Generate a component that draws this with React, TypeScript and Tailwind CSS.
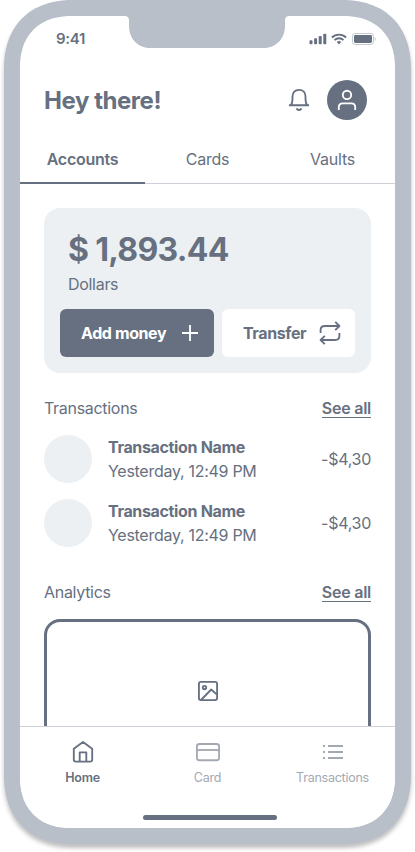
import type { ReactNode } from "react";

const base = {
  fill: "none",
  stroke: "currentColor",
  strokeWidth: 1.85,
  strokeLinejoin: "round" as const,
};

function StatusBar() {
  return (
    <div className="flex h-11 shrink-0 items-center justify-between pl-9 pr-[19px] pt-0.5">
      <span className="text-[15px] font-semibold leading-5 tracking-[-0.3px]">9:41</span>
      <svg width="67" height="12" viewBox="0 0 67 12" fill="currentColor">
        <rect x="0.5" y="7.3" width="3" height="4" rx="0.8" />
        <rect x="5.1" y="5.3" width="3" height="6" rx="0.8" />
        <rect x="9.7" y="3" width="3" height="8.3" rx="0.8" />
        <rect x="14.3" y="0.7" width="3" height="10.6" rx="0.8" />
        <g fill="none" stroke="currentColor" strokeWidth="1.9">
          <path d="M22.9 4.5a10.2 10.2 0 0 1 14.2 0" />
          <path d="M25.5 7.1a6.4 6.4 0 0 1 9 0" />
        </g>
        <path d="M27.8 9a3.2 3.2 0 0 1 4.4 0L30 11.4z" />
        <rect x="43.5" y="0.5" width="21" height="11" rx="2.7" fill="none" stroke="currentColor" opacity="0.38" />
        <rect x="45" y="2" width="18" height="8" rx="1.4" />
        <path d="M65.7 4v4c1.3-.5 1.3-3.5 0-4z" opacity="0.45" />
      </svg>
    </div>
  );
}

function Notch() {
  return (
    <svg className="absolute left-[104px] top-0 text-[#b8bfc9]" width="168" height="33" viewBox="0 0 168 33" fill="currentColor">
      <path d="M0 0c4 0 5 1.500 5 5v5c0 12.500 9 22 21 22h114c12 0 21-9.500 21-22V5c0-3.500 1-5 5-5z" />
    </svg>
  );
}

function Header() {
  return (
    <div className="flex h-20 shrink-0 items-center pl-6 pr-7">
      <h1 className="flex-1 pt-0.5 text-2xl font-bold leading-8 tracking-[-0.45px]">Hey there!</h1>
      <svg className="mr-4" width="24" height="24" viewBox="0 0 24 24" {...base}>
        <path d="M2 17.200h20M4 17.200c1-1.800 1.500-3.500 1.500-6.200V8.500C5.500 4.500 8 1.900 12 1.900s6.500 2.600 6.500 6.600V11c0 2.700.5 4.400 1.500 6.200" />
        <path d="M9.600 20.300c.5 1.300 1.300 1.700 2.400 1.700s1.900-.4 2.400-1.700" />
      </svg>
      <div className="flex size-10 items-center justify-center rounded-full bg-[#667080] text-white">
        <svg width="24" height="24" viewBox="0 0 24 24" {...base}>
          <circle cx="12" cy="6.900" r="4.200" />
          <path d="M3.800 22v-2.800c0-2.500 1.400-3.900 3.900-3.900h8.600c2.500 0 3.900 1.400 3.900 3.900V22" />
        </svg>
      </div>
    </div>
  );
}

function Tabs() {
  return (
    <div className="flex h-11 shrink-0 border-b border-[#ced2d8] text-center text-base leading-6 tracking-[-0.25px]">
      <div className="-mb-px flex-1 border-b-2 border-[#667080] pt-[7px] font-semibold">Accounts</div>
      <div className="flex-1 pt-[7px]">Cards</div>
      <div className="flex-1 pt-[7px]">Vaults</div>
    </div>
  );
}

function Balance() {
  return (
    <div className="mt-6 h-[165px] shrink-0 rounded-2xl bg-[#ecf0f3] px-4 pt-5">
      <div className="px-2 text-[32px] font-bold leading-[44px] tracking-[-0.7px]">$ 1,893.44</div>
      <div className="px-2 text-base leading-6 tracking-[-0.3px]">Dollars</div>
      <div className="mt-[13px] flex gap-2 text-base font-bold tracking-[-0.4px]">
        <button className="flex h-12 w-[154px] items-center justify-between rounded-md bg-[#667080] pl-[21px] pr-3 text-white">
          Add money
          <svg width="24" height="24" viewBox="0 0 24 24" {...base}><path d="M12 4v16M4 12h16" /></svg>
        </button>
        <button className="flex h-12 w-[133px] items-center justify-between rounded-md bg-white pl-[21px] pr-[13px]">
          Transfer
          <svg width="24" height="24" viewBox="0 0 24 24" {...base}>
            <path d="M17.200.8 21.400 5l-4.200 4.200M21 5H7C4 5 2.600 6.600 2.600 9v3" />
            <path d="M6.800 14.800 2.600 19l4.200 4.200M3 19h14c3 0 4.400-1.600 4.400-4v-3" />
          </svg>
        </button>
      </div>
    </div>
  );
}

function SectionTitle({ title }: { title: string }) {
  return (
    <div className="flex h-6 items-start justify-between text-base leading-6 tracking-[-0.3px]">
      <span>{title}</span>
      <a className="h-[22px] border-b border-[#667080] font-semibold tracking-[-0.25px]">See all</a>
    </div>
  );
}

function Transaction() {
  return (
    <div className="flex h-12 items-center gap-4 text-base leading-6 tracking-[-0.28px]">
      <div className="size-12 rounded-full bg-[#ecf0f3]" />
      <div className="flex-1">
        <div className="font-bold tracking-[-0.34px]">Transaction Name</div>
        <div>Yesterday, 12:49 PM</div>
      </div>
      <div>-$4,30</div>
    </div>
  );
}

function NavItem({ label, active, children }: { label: string; active?: boolean; children: ReactNode }) {
  return (
    <div className={active ? "flex flex-1 flex-col items-center font-semibold" : "flex flex-1 flex-col items-center text-[#a3a9b3]"}>
      <svg width="24" height="24" viewBox="0 0 24 24" {...base}>{children}</svg>
      <span className="mt-1 text-[12.5px] leading-5 tracking-[-0.25px]">{label}</span>
    </div>
  );
}

function BottomNav() {
  return (
    <div className="flex h-[102px] shrink-0 flex-col items-center border-t border-[#ced2d8] bg-white pt-[13px]">
      <div className="flex w-full">
        <NavItem label="Home" active>
          <path d="M2.800 8.700 12 1.900l9.200 6.800v10.800c0 1.500-.6 2.100-2.100 2.100H4.900c-1.500 0-2.100-.6-2.100-2.100zM8.700 21.600V12.300h6.600v9.300" />
        </NavItem>
        <NavItem label="Card">
          <rect x="0.9" y="4" width="22.200" height="16.200" rx="2.500" />
          <path d="M1 10h22" />
        </NavItem>
        <NavItem label="Transactions">
          <path d="M7 6h15M7 12h15M7 18h15M2 6h2M2 12h2M2 18h2" />
        </NavItem>
      </div>
      <div className="ml-[5px] mt-[27px] h-[5px] w-[134px] rounded-full bg-[#667080]" />
    </div>
  );
}

export default function App() {
  return (
    <div className="h-[852px] w-[415px] bg-white px-1 font-['Inter',sans-serif] text-[#667080]">
      <div className="h-[844px] w-[407px] rounded-[70px] bg-[#b8bfc9] p-4 shadow-[0_4px_4px_rgba(0,0,0,0.25)] [corner-shape:superellipse(1.2)]">
        <div className="relative flex h-[812px] w-[375px] flex-col overflow-hidden rounded-[52px] bg-white [corner-shape:superellipse(1.2)]">
          <Notch />
          <StatusBar />
          <Header />
          <Tabs />
          <main className="flex min-h-0 flex-1 flex-col overflow-hidden px-6">
            <Balance />
            <section className="mt-[23px] shrink-0">
              <SectionTitle title="Transactions" />
              <div className="mt-[15px] flex flex-col gap-4">
                <Transaction />
                <Transaction />
              </div>
            </section>
            <section className="mt-[33px] shrink-0">
              <SectionTitle title="Analytics" />
              <div className="mt-[15px] flex h-[143px] items-center justify-center rounded-2xl border-[3px] border-[#667080]">
                <svg width="24" height="24" viewBox="0 0 24 24" {...base}>
                  <rect x="2.900" y="2.900" width="18.200" height="18.200" rx="2" />
                  <circle cx="8.500" cy="8.500" r="1.700" />
                  <path d="m5 21 10.200-10.500L21 15.600" />
                </svg>
              </div>
            </section>
          </main>
          <BottomNav />
        </div>
      </div>
    </div>
  );
}
